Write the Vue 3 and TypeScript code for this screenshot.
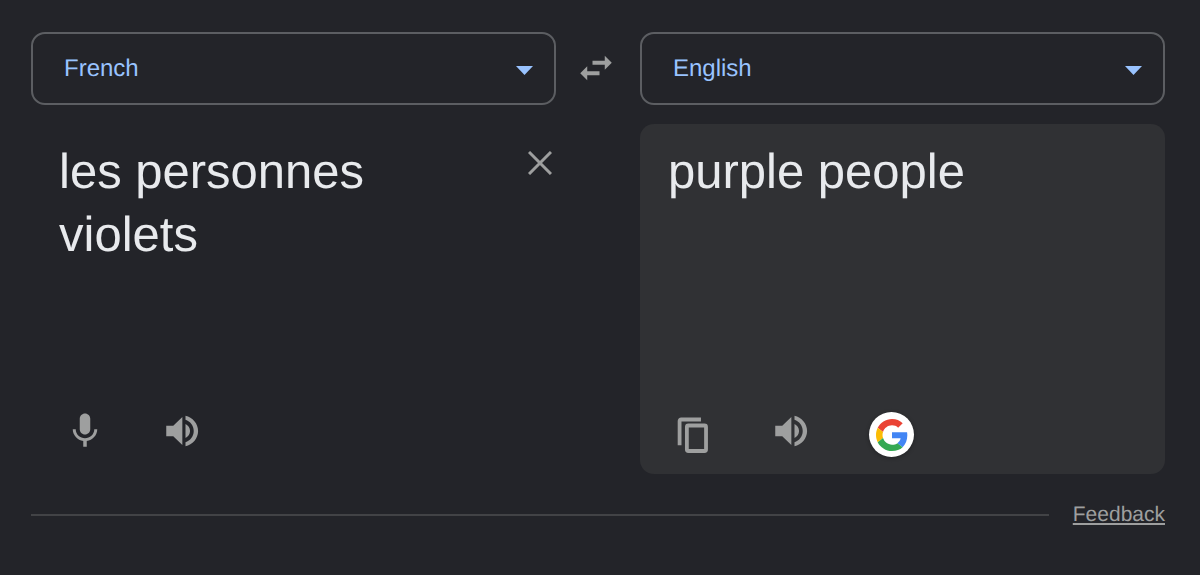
<script setup lang="ts">
import { ref } from 'vue'

const languages: string[] = ['French', 'English', 'German', 'Spanish', 'Italian']
const sourceLanguage = ref<string>('French')
const targetLanguage = ref<string>('English')
const sourceText = ref<string>('les personnes violets')
const translation = ref<string>('purple people')

function swapLanguages(): void {
  const language = sourceLanguage.value
  sourceLanguage.value = targetLanguage.value
  targetLanguage.value = language
  const text = sourceText.value
  sourceText.value = translation.value
  translation.value = text
}

function clearText(): void {
  sourceText.value = ''
  translation.value = ''
}

function copyTranslation(): void {
  navigator.clipboard?.writeText(translation.value)
}

function speak(text: string): void {
  window.speechSynthesis?.speak(new SpeechSynthesisUtterance(text))
}
</script>

<template>
  <main class="translator">
    <div class="grid">
      <div class="picker">
        <select v-model="sourceLanguage" class="language" aria-label="Source language">
          <option v-for="name in languages" :key="name">{{ name }}</option>
        </select>
        <svg class="caret" viewBox="0 0 17 9" aria-hidden="true"><path d="M0 0h17L8.500 9z" /></svg>
      </div>

      <button class="icon-button swap" type="button" aria-label="Swap languages" @click="swapLanguages">
        <svg class="icon" viewBox="0 0 24 24" aria-hidden="true">
          <path d="M6.990 11L3 15l3.990 4v-2.900H14v-2.200H6.990V11zM21 9l-3.990-4v2.900H10v2.200h7.010V13L21 9z" />
        </svg>
      </button>

      <div class="picker">
        <select v-model="targetLanguage" class="language" aria-label="Target language">
          <option v-for="name in languages" :key="name">{{ name }}</option>
        </select>
        <svg class="caret" viewBox="0 0 17 9" aria-hidden="true"><path d="M0 0h17L8.500 9z" /></svg>
      </div>

      <section class="panel source">
        <div class="entry">
          <textarea v-model="sourceText" class="text" rows="3" spellcheck="false" aria-label="Text to translate"></textarea>
          <button class="icon-button clear" type="button" aria-label="Clear text" @click="clearText">
            <svg class="cross" viewBox="0 0 24 24" aria-hidden="true"><path d="M1 1l22 22M23 1L1 23" /></svg>
          </button>
        </div>
        <div class="tools source-tools">
          <button class="icon-button" type="button" aria-label="Speak to translate">
            <svg class="icon" viewBox="0 0 24 24" aria-hidden="true">
              <path d="M12 14c1.660 0 3-1.340 3-3V5c0-1.660-1.340-3-3-3S9 3.340 9 5v6c0 1.660 1.340 3 3 3zm5.300-3c0 3-2.540 5.100-5.300 5.100S6.700 14 6.700 11H5c0 3.410 2.720 6.230 6 6.720V21h2v-3.280c3.280-.480 6-3.300 6-6.720h-1.700z" />
            </svg>
          </button>
          <button class="icon-button" type="button" aria-label="Listen to source text" @click="speak(sourceText)">
            <svg class="icon" viewBox="0 0 24 24" aria-hidden="true">
              <path d="M3 9v6h4l5.200 5V4L7 9H3zm13.600 3c0-1.770-1.120-3.290-2.600-4.030v8.050c1.480-.730 2.600-2.250 2.600-4.020zM14 3.230v2.370c2.700.860 4.700 3.400 4.700 6.400s-2 5.540-4.700 6.400v2.370c4.010-.910 7.200-4.490 7.200-8.770s-3.190-7.860-7.200-8.770z" />
            </svg>
          </button>
        </div>
      </section>

      <section class="panel target">
        <p class="text">{{ translation }}</p>
        <div class="tools target-tools">
          <button class="icon-button low" type="button" aria-label="Copy translation" @click="copyTranslation">
            <svg class="copy" viewBox="0 0 24 24" aria-hidden="true">
              <path d="M16.400 2.200H3.900a1 1 0 0 0-1 1v15.300" />
              <rect x="7.500" y="6" width="12.100" height="16.100" rx="1" />
            </svg>
          </button>
          <button class="icon-button" type="button" aria-label="Listen to translation" @click="speak(translation)">
            <svg class="icon" viewBox="0 0 24 24" aria-hidden="true">
              <path d="M3 9v6h4l5.200 5V4L7 9H3zm13.600 3c0-1.770-1.120-3.290-2.600-4.030v8.050c1.480-.730 2.600-2.250 2.600-4.020zM14 3.230v2.370c2.700.860 4.700 3.400 4.700 6.400s-2 5.540-4.700 6.400v2.370c4.010-.910 7.200-4.490 7.200-8.770s-3.190-7.860-7.200-8.770z" />
            </svg>
          </button>
          <button class="icon-button low google" type="button" aria-label="Search with Google">
            <svg class="logo" viewBox="0 0 48 48" aria-hidden="true">
              <path fill="#ea4335" d="M24 9.500c3.540 0 6.710 1.220 9.210 3.600l6.850-6.850C35.900 2.380 30.470 0 24 0 14.620 0 6.510 5.380 2.560 13.220l7.980 6.190C12.430 13.720 17.740 9.500 24 9.500z" />
              <path fill="#4285f4" d="M46.980 24.550c0-1.570-.150-3.090-.380-4.550H24v9.020h12.940c-.580 2.960-2.260 5.480-4.780 7.180l7.730 6c4.510-4.180 7.090-10.360 7.090-17.650z" />
              <path fill="#fbbc05" d="M10.530 28.590c-.480-1.450-.760-2.990-.760-4.590s.270-3.140.760-4.590l-7.980-6.190C.920 16.460 0 20.120 0 24c0 3.880.920 7.540 2.560 10.780l7.970-6.190z" />
              <path fill="#34a853" d="M24 48c6.480 0 11.930-2.130 15.890-5.810l-7.730-6c-2.150 1.450-4.920 2.300-8.160 2.300-6.260 0-11.570-4.220-13.470-9.910l-7.980 6.190C6.510 42.620 14.620 48 24 48z" />
            </svg>
          </button>
        </div>
      </section>
    </div>

    <footer class="footer">
      <hr class="rule" />
      <a class="feedback" href="#feedback">Feedback</a>
    </footer>
  </main>
</template>

<style>
html {
  background: #232429;
}

body {
  margin: 0;
}
</style>

<style scoped>
.translator {
  box-sizing: border-box;
  min-height: 100vh;
  padding: 32px 35px 32px 31px;
  background: #232429;
  color: #e8eaed;
  font-family: "Liberation Sans", Arial, sans-serif;
  text-rendering: geometricPrecision;
}

.grid {
  display: grid;
  grid-template-columns: minmax(0, 1fr) 84px minmax(0, 1fr);
  row-gap: 19px;
}

.picker {
  display: grid;
  align-items: center;
}

.picker > * {
  grid-area: 1 / 1;
}

.language {
  appearance: none;
  box-sizing: border-box;
  width: 100%;
  height: 73px;
  margin: 0;
  padding: 0 60px 0 31px;
  border: 2px solid #5c5e62;
  border-radius: 14px;
  background: transparent;
  color: #99c3ff;
  font: 24px "Liberation Sans", Arial, sans-serif;
  text-rendering: geometricPrecision;
  cursor: pointer;
}

.language option {
  background: #303134;
}

.caret {
  justify-self: end;
  width: 17px;
  height: 9px;
  margin: 4px 23px 0 0;
  fill: #99c3ff;
  pointer-events: none;
}

.icon-button {
  display: flex;
  align-items: center;
  justify-content: center;
  margin: 0;
  padding: 0;
  border: 0;
  background: none;
  color: #9e9f9f;
  cursor: pointer;
}

.icon {
  display: block;
  width: 42px;
  height: 42px;
  fill: currentColor;
}

.swap {
  padding: 0 4px 2px 0;
}

.panel {
  display: flex;
  flex-direction: column;
  justify-content: space-between;
  box-sizing: border-box;
  min-height: 350px;
  padding: 17px 0;
  border-radius: 14px;
}

.target {
  grid-column: 3;
  background: #303134;
}

.entry {
  display: flex;
  align-items: flex-start;
  gap: 20px;
}

.text {
  flex: 1;
  min-width: 0;
  margin: 0;
  padding: 0 0 0 28px;
  border: 0;
  outline: 0;
  background: transparent;
  color: #e8eaed;
  font: 49px/63px "Liberation Sans", Arial, sans-serif;
  text-rendering: geometricPrecision;
  resize: none;
  overflow-wrap: break-word;
}

.clear {
  width: 32px;
  height: 44px;
}

.cross {
  width: 24px;
  height: 24px;
  fill: none;
  stroke: currentColor;
  stroke-width: 3;
}

.tools {
  display: flex;
  align-items: flex-start;
  min-height: 47px;
}

.source-tools {
  gap: 55px;
  padding-left: 33px;
}

.target-tools {
  gap: 57px;
  padding-left: 35px;
}

.low {
  align-self: flex-end;
  height: 45px;
}

.copy {
  width: 38px;
  height: 38px;
  fill: none;
  stroke: currentColor;
  stroke-width: 2.4;
}

.google {
  width: 45px;
  border-radius: 50%;
  background: #fff;
  box-shadow: 0 1px 4px rgba(0, 0, 0, 0.3);
}

.logo {
  width: 32px;
  height: 32px;
}

.footer {
  display: flex;
  align-items: center;
  gap: 24px;
  margin-top: 28px;
}

.rule {
  flex: 1;
  height: 2px;
  margin: 0;
  border: 0;
  background: #424346;
}

.feedback {
  color: #9e9f9f;
  font-size: 21px;
  line-height: 26px;
  text-decoration: underline;
}
</style>
